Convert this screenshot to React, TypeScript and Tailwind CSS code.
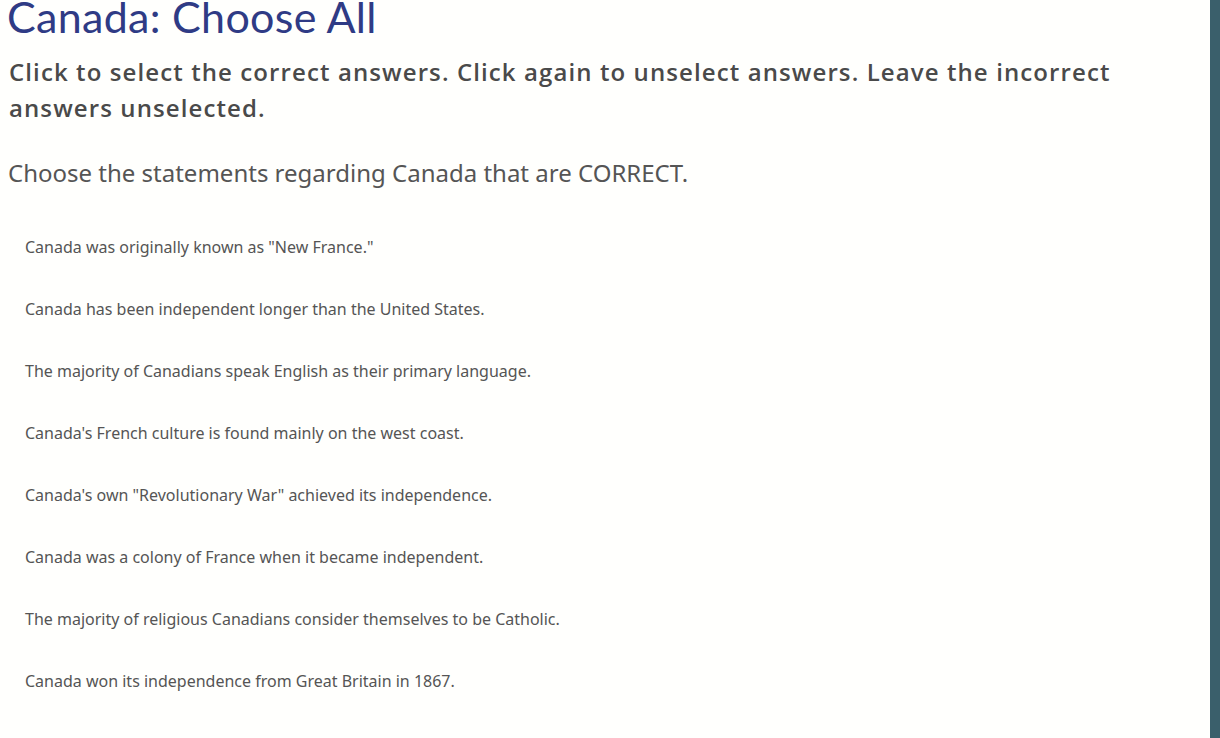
import React from 'react';

const OPTIONS = [
  'Canada was originally known as "New France."',
  'Canada has been independent longer than the United States.',
  'The majority of Canadians speak English as their primary language.',
  "Canada's French culture is found mainly on the west coast.",
  'Canada\'s own "Revolutionary War" achieved its independence.',
  'Canada was a colony of France when it became independent.',
  'The majority of religious Canadians consider themselves to be Catholic.',
  'Canada won its independence from Great Britain in 1867.',
];

export default function App() {
  return (
    <div className="flex h-[738px] w-[1220px] overflow-hidden bg-[#fffffd]">
      <div className="flex-1 min-w-0">
        <h1 className="pl-[7px] font-['Lato',sans-serif] text-[43px] leading-[34px] tracking-[0.3px] text-[#2f3b85]">
          Canada: Choose All
        </h1>
        <p className="mt-[20px] pl-[9px] pr-[60px] font-['Open_Sans',sans-serif] text-[24px] font-semibold leading-[36px] tracking-[1.1px] text-[#4a4a4a]">
          Click to select the correct answers. Click again to unselect answers. Leave the incorrect answers unselected.
        </p>
        <p className="mt-[30px] pl-[8px] font-['Noto_Sans',sans-serif] text-[24px] leading-[34px] text-[#555555]">
          Choose the statements regarding Canada that are CORRECT.
        </p>
        <ul className="mt-[46px] flex flex-col gap-[40px] pl-[25px]">
          {OPTIONS.map((o) => (
            <li
              key={o}
              className="cursor-pointer font-['Noto_Sans',sans-serif] text-[16px] leading-[22px] text-[#555555]"
            >
              {o}
            </li>
          ))}
        </ul>
      </div>
      <div className="w-[10px] shrink-0 bg-[#3a5f6b]" />
    </div>
  );
}
